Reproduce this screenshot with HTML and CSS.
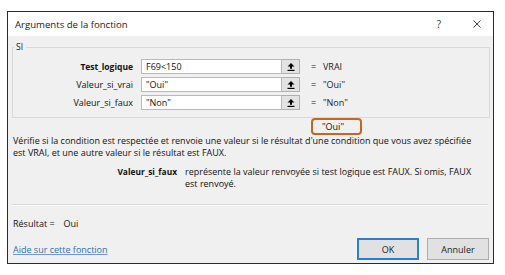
FILE: index.html
```html
<!DOCTYPE html>
<html lang="fr">
<head>
<meta charset="utf-8">
<title>Arguments de la fonction</title>
<link rel="stylesheet" href="styles.css">
</head>
<body>
<div class="dialog">
  <div class="titlebar">
    <span class="title">Arguments de la fonction</span>
    <span class="help">?</span>
    <span class="close"><svg width="8" height="8" viewBox="0 0 8 8"><path d="M0.5 0.5 L7.5 7.5 M7.5 0.5 L0.5 7.5" stroke="#333" stroke-width="0.9" fill="none"/></svg></span>
  </div>
  <div class="body">
    <fieldset class="group">
      <legend>SI</legend>
      <div class="arg">
        <span class="name strong">Test_logique</span>
        <span class="input">F69&lt;150</span>
        <span class="ref"><svg width="8" height="8" viewBox="0 0 8 8"><path d="M4 0 L7.5 3.6 H5 V5.8 H3 V3.6 H0.5 Z" fill="#000"/><rect x="0.5" y="6.8" width="7" height="1.2" fill="#000"/></svg></span>
        <span class="eq">=</span>
        <span class="val">VRAI</span>
      </div>
      <div class="arg">
        <span class="name">Valeur_si_vrai</span>
        <span class="input">"Oui"</span>
        <span class="ref"><svg width="8" height="8" viewBox="0 0 8 8"><path d="M4 0 L7.5 3.6 H5 V5.8 H3 V3.6 H0.5 Z" fill="#000"/><rect x="0.5" y="6.8" width="7" height="1.2" fill="#000"/></svg></span>
        <span class="eq">=</span>
        <span class="val">"Oui"</span>
      </div>
      <div class="arg">
        <span class="name">Valeur_si_faux</span>
        <span class="input">"Non"</span>
        <span class="ref"><svg width="8" height="8" viewBox="0 0 8 8"><path d="M4 0 L7.5 3.6 H5 V5.8 H3 V3.6 H0.5 Z" fill="#000"/><rect x="0.5" y="6.8" width="7" height="1.2" fill="#000"/></svg></span>
        <span class="eq">=</span>
        <span class="val">"Non"</span>
      </div>
    </fieldset>
    <div class="result-row"><span class="highlight">"Oui"</span></div>
    <p class="desc">Vérifie si la condition est respectée et renvoie une valeur si le résultat d'une condition que vous avez spécifiée<br>est VRAI, et une autre valeur si le résultat est FAUX.</p>
    <div class="argdesc">
      <span class="argname">Valeur_si_faux</span>
      <span class="argtext">représente la valeur renvoyée si test logique est FAUX. Si omis, FAUX<br>est renvoyé.</span>
    </div>
    <div class="sep"></div>
    <div class="resultat"><span>Résultat =</span><span class="resval">Oui</span></div>
    <div class="footer">
      <a class="link" href="#">Aide sur cette fonction</a>
      <div class="buttons">
        <span class="btn ok">OK</span>
        <span class="btn">Annuler</span>
      </div>
    </div>
  </div>
</div>
</body>
</html>
```

FILE: styles.css
```css
html, body {
  margin: 0;
  padding: 0;
  background: #ffffff;
}
body {
  font-family: "Open Sans", "Noto Sans", sans-serif;
  font-size: 9px;
  color: #111;
  padding: 11px 0 0 7px;
}
.dialog {
  box-sizing: border-box;
  width: 487px;
  height: 253px;
  border: 1px solid #2b2b2b;
  background: #f0f0f0;
  display: flex;
  flex-direction: column;
}
.titlebar {
  height: 24px;
  background: #ffffff;
  display: flex;
  align-items: center;
  padding: 0 4px 0 7px;
  flex: none;
}
.title {
  font-size: 9.6px;
  color: #222;
  flex: 1;
}
.help {
  width: 20px;
  text-align: center;
  font-size: 10px;
  color: #333;
  margin-right: 16px;
}
.close {
  width: 24px;
  display: flex;
  justify-content: center;
  align-items: center;
}
.body {
  padding: 5px 4px 0 5px;
  display: flex;
  flex-direction: column;
  flex: 1;
}
.group {
  margin: 0 -1px 0 -1px;
  padding: 6px 0 7px 0;
  border: 1px solid #d9d9d9;
  display: flex;
  flex-direction: column;
  gap: 3px;
  min-width: 0;
}
.group legend {
  padding: 0 3px 0 2px;
  margin-left: 1px;
  line-height: 12px;
  height: 12px;
  font-size: 8.6px;
  color: #222;
}
.arg {
  display: flex;
  align-items: center;
  height: 15px;
}
.name {
  width: 120px;
  text-align: right;
  flex: none;
}
.strong {
  font-weight: 700;
  font-size: 8.5px;
}
.input {
  box-sizing: border-box;
  margin-left: 8px;
  width: 141px;
  height: 15px;
  background: #fff;
  border: 1px solid #b9b9b9;
  padding: 0 3px 0 4px;
  line-height: 13px;
  flex: none;
}
.ref {
  box-sizing: border-box;
  width: 18px;
  height: 15px;
  background: #e3e3e3;
  border: 1px solid #b0b0b0;
  border-left: none;
  display: flex;
  align-items: center;
  justify-content: center;
  flex: none;
}
.eq {
  margin-left: 11px;
  width: 12px;
}
.val {
  color: #222;
}
.result-row {
  display: flex;
  padding-left: 298px;
  height: 17px;
}
.highlight {
  box-sizing: border-box;
  width: 51px;
  height: 17px;
  border: 2px solid #c8661d;
  border-radius: 4px;
  padding-left: 9px;
  line-height: 13px;
}
.desc {
  margin: 0;
  line-height: 12px;
}
.argdesc {
  display: flex;
  margin-top: 7px;
  line-height: 12px;
}
.argname {
  width: 164px;
  text-align: right;
  font-weight: 700;
  font-size: 8.4px;
  flex: none;
}
.argtext {
  margin-left: 8px;
}
.sep {
  margin: 14px 1px 0 -1px;
  height: 0;
  border-top: 1px solid #dadada;
  border-bottom: 1px solid #fafafa;
}
.resultat {
  margin-top: 12px;
  line-height: 12px;
  display: flex;
}
.resval {
  margin-left: 9px;
}
.footer {
  margin-top: 8px;
  display: flex;
  align-items: center;
  justify-content: space-between;
}
.link {
  color: #2f6fb5;
  text-decoration: underline;
  text-decoration-color: #6f9ccc;
}
.buttons {
  display: flex;
  gap: 8px;
}
.btn {
  box-sizing: border-box;
  width: 62px;
  height: 22px;
  display: flex;
  align-items: center;
  justify-content: center;
  background: #e1e1e1;
  border: 1px solid #adadad;
  color: #222;
}
.btn.ok {
  border: 2px solid #2a7fd0;
}
```
